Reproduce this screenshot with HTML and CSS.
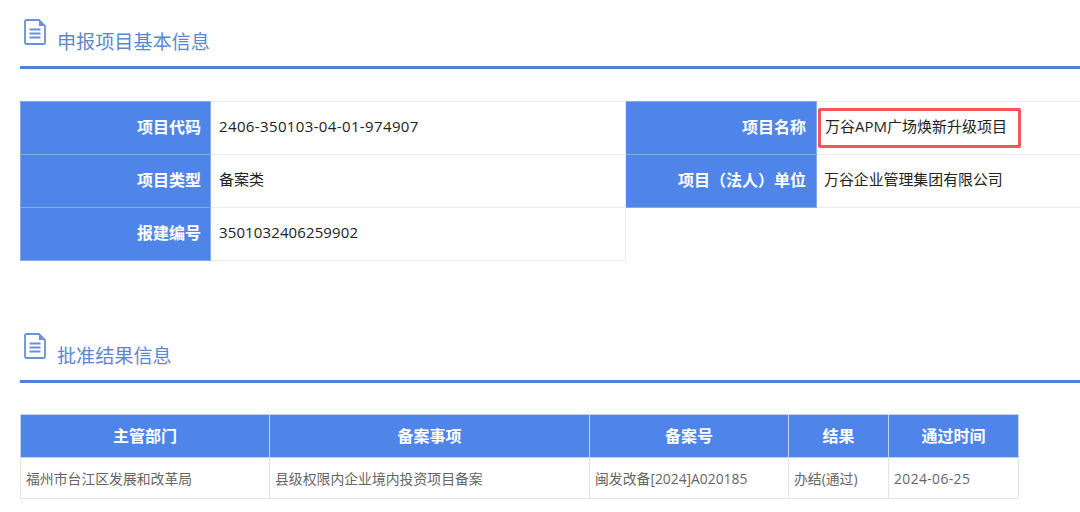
FILE: index.html
```html
<!DOCTYPE html>
<html lang="zh-CN">
<head>
<meta charset="utf-8">
<title>申报项目基本信息</title>
<link rel="stylesheet" href="styles.css">
</head>
<body>
<svg class="sprite" width="0" height="0" aria-hidden="true">
  <symbol id="doc" viewBox="0 0 22 26">
    <path d="M2.500 1h12.500l6 6v16.500a1.500 1.500 0 0 1-1.500 1.500h-17a1.500 1.500 0 0 1-1.500-1.500v-21a1.500 1.500 0 0 1 1.500-1.500z" fill="none" stroke="currentColor" stroke-width="1.800"/>
    <path d="M15 1v6h6z" fill="currentColor"/>
    <path d="M5.500 10.500h11M5.500 14.500h11M5.500 18.500h11" fill="none" stroke="currentColor" stroke-width="2"/>
  </symbol>
</svg>
<main class="page">
  <section class="section section-first">
    <header class="head">
      <svg class="doc-icon"><use href="#doc"/></svg>
      <h2 class="head-title">申报项目基本信息</h2>
    </header>
    <table class="info">
      <colgroup><col class="c-l1"><col class="c-v"><col class="c-l"><col class="c-v2"></colgroup>
      <tr>
        <th>项目代码</th><td class="code">2406-350103-04-01-974907</td>
        <th>项目名称</th><td class="marked"><span class="mark" aria-hidden="true"></span>万谷APM广场焕新升级项目</td>
      </tr>
      <tr>
        <th>项目类型</th><td>备案类</td>
        <th>项目（法人）单位</th><td class="company">万谷企业管理集团有限公司</td>
      </tr>
      <tr>
        <th>报建编号</th><td class="num">3501032406259902</td>
      </tr>
    </table>
  </section>
  <section class="section section-second">
    <header class="head">
      <svg class="doc-icon"><use href="#doc"/></svg>
      <h2 class="head-title">批准结果信息</h2>
    </header>
    <table class="result">
      <colgroup><col class="r1"><col class="r2"><col class="r3"><col class="r4"><col class="r5"></colgroup>
      <tr><th>主管部门</th><th>备案事项</th><th>备案号</th><th>结果</th><th>通过时间</th></tr>
      <tr>
        <td>福州市台江区发展和改革局</td>
        <td>县级权限内企业境内投资项目备案</td>
        <td>闽发改备[2024]A020185</td>
        <td>办结(通过)</td>
        <td class="date">2024-06-25</td>
      </tr>
    </table>
  </section>
</main>
</body>
</html>
```
FILE: styles.css
```css
* { box-sizing: border-box; }
html, body { margin: 0; height: 512px; overflow: hidden; background: #fff; }
body { font-family: "Open Sans", "Noto Sans CJK SC", sans-serif; color: #222; }
.sprite { position: absolute; }
.page { width: 1080px; padding-left: 20px; }
.section-first { padding-top: 19px; }
.section-second { padding-top: 72px; }
.head {
  display: flex;
  align-items: flex-start;
  height: 50px;
  border-bottom: 3px solid #4f82e0;
  color: #5e86cf;
}
.doc-icon { width: 22px; height: 26px; margin-left: 4px; color: #6a90d8; flex: none; }
.head-title {
  margin: 9px 0 0 11px;
  font-size: 19.1px;
  line-height: 28px;
  font-weight: 400;
  color: #5e86cf;
}
table { border-collapse: collapse; table-layout: fixed; }
.info { margin-top: 32px; width: 1080px; }
.c-l1 { width: 190px; }
.c-l { width: 191px; }
.c-v { width: 415px; }
.c-v2 { width: 284px; }
.info th, .info td { height: 53px; padding: 0 8px; font-size: 15px; line-height: 20px; }
.info td { padding-bottom: 4px; border: 1px solid #ececec; color: #222; }
.info th {
  padding: 0 10px 2px 8px;
  text-align: right;
  font-size: 16px;
  font-weight: 700;
  color: #fff;
  background: #4f84e8;
  border: 1px solid #86a9ea;
}
.info th:first-child { padding-right: 9px; }
.info .code { letter-spacing: 0.37px; }
.info .num { letter-spacing: 0.12px; }
.info .company { padding-left: 7px; font-size: 14.9px; }
.info tr:first-child td:last-child,
.info tr:nth-child(2) td:last-child { border-right: 0; }
.marked { position: relative; }
.mark {
  position: absolute;
  left: 1px;
  top: 6px;
  width: 203px;
  height: 40px;
  border: 3px solid #f55459;
  border-radius: 2px;
}
.result { margin-top: 31px; width: 998px; }
.r1 { width: 249px; }
.r2 { width: 320px; }
.r3 { width: 199px; }
.r4 { width: 100px; }
.r5 { width: 130px; }
.result th {
  height: 43px;
  padding: 0 5px 2px;
  text-align: center;
  font-size: 16px;
  font-weight: 700;
  color: #fff;
  background: #4f84e8;
  border: 1px solid #c5d3ee;
}
.result td {
  height: 41px;
  padding: 0 5px;
  font-size: 13.85px;
  color: #666;
  border: 1px solid #e4e4e4;
}
.result .date { letter-spacing: 0.4px; }
```
